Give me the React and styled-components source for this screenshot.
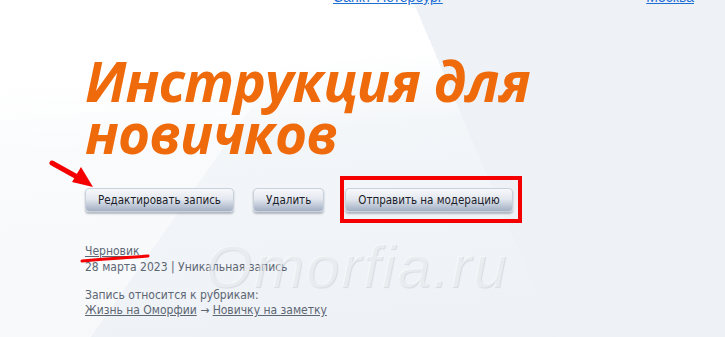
import React from "react"
import styled, { createGlobalStyle } from "styled-components"

const GlobalStyle = createGlobalStyle`
  html, body {
    margin: 0;
    padding: 0;
    background: #fff;
  }
`

const App = () => (
  <>
    <GlobalStyle />
    <Page>
      <TopLinks>
        <TopLink href="#">Санкт-Петербург</TopLink>
        <TopLink href="#">Москва</TopLink>
      </TopLinks>

      <Content>
        <Title>
          Инструкция для
          <br />
          новичков
        </Title>

        <Actions>
          <Button>Редактировать запись</Button>
          <Button>Удалить</Button>
          <Highlight>
            <Button>Отправить на модерацию</Button>
          </Highlight>
        </Actions>

        <Meta>
          <MetaLink href="#">Черновик</MetaLink>
          <div>28 марта 2023 | Уникальная запись</div>
        </Meta>

        <Rubrics>
          <div>Запись относится к рубрикам:</div>
          <div>
            <MetaLink href="#">Жизнь на Оморфии</MetaLink> →{" "}
            <MetaLink href="#">Новичку на заметку</MetaLink>
          </div>
        </Rubrics>
      </Content>

      <Watermark>Omorfia.ru</Watermark>

      <Marks width="725" height="337" viewBox="0 0 725 337">
        <path
          d="M52 163 L79 178"
          stroke="#f40000"
          strokeWidth="5"
          strokeLinecap="round"
        />
        <polygon points="93,187 72,182 81,167" fill="#f40000" />
        <path
          d="M82 261 C100 259 125 258 148 256"
          stroke="#f40000"
          strokeWidth="3"
          strokeLinecap="round"
          fill="none"
        />
      </Marks>
    </Page>
  </>
)
export default App

//styled-components
const Page = styled.div`
  position: relative;
  width: 725px;
  height: 337px;
  overflow: hidden;
  background:
    linear-gradient(67deg, transparent 0 64%, #eef2f7 64% 100%),
    linear-gradient(125deg, rgba(255, 255, 255, 0.5) 0 34%, transparent 34% 100%),
    linear-gradient(175deg, #ffffff 0 22%, #f3f6f9 40%, #edf1f6 100%);
  font-family: "DejaVu Sans", Tahoma, sans-serif;
`
const TopLinks = styled.div`
  display: flex;
  justify-content: space-between;
  width: 361px;
  margin: -11px 0 0 333px;
  height: 17px;
`
const TopLink = styled.a`
  font-family: "Liberation Sans", Arial, sans-serif;
  font-size: 14px;
  line-height: 17px;
  color: #1f6fd3;
  text-decoration: underline;
`
const Content = styled.div`
  padding: 49px 0 0 85px;
`
const Title = styled.h1`
  margin: 0;
  font-family: "Open Sans", sans-serif;
  font-stretch: normal;
  font-style: italic;
  font-weight: 700;
  font-size: 55px;
  line-height: 52px;
  color: #ee6a0a;
  letter-spacing: -0.9px;
`
const Actions = styled.div`
  display: flex;
  align-items: center;
  gap: 19px;
  margin-top: 17px;
`
const Button = styled.button`
  height: 24px;
  padding: 0 12px;
  border: 1px solid #c9d1dd;
  border-radius: 4px;
  background: linear-gradient(#f7f8fb 0%, #e4e8ef 45%, #b9c3d3 80%, #a3afc3 100%);
  box-shadow: 0 2px 2px rgba(60, 70, 90, 0.35);
  font-family: "DejaVu Sans Condensed", "DejaVu Sans", sans-serif;
  font-stretch: condensed;
  font-size: 11.5px;
  color: #1b1d2a;
  cursor: pointer;
`
const Highlight = styled.div`
  display: flex;
  margin-left: -3px;
  padding: 8px 5px 7px 1px;
  border: 4px solid #f40000;
`
const Meta = styled.div`
  margin-top: 20px;
  font-family: "DejaVu Sans Condensed", "DejaVu Sans", sans-serif;
  font-stretch: condensed;
  font-size: 12px;
  line-height: 16px;
  color: #5d6673;
`
const Rubrics = styled(Meta)`
  margin-top: 13px;
  line-height: 15px;
`
const MetaLink = styled.a`
  color: #5d6673;
  text-decoration: underline;
`
const Watermark = styled.div`
  position: absolute;
  left: 205px;
  top: 232px;
  font-family: "Liberation Sans", sans-serif;
  font-style: italic;
  font-size: 60px;
  letter-spacing: 2px;
  color: rgba(255, 255, 255, 0.45);
  text-shadow: 1px 1px 1px rgba(120, 130, 145, 0.2);
  pointer-events: none;
`
const Marks = styled.svg`
  position: absolute;
  left: 0;
  top: 0;
  pointer-events: none;
`
